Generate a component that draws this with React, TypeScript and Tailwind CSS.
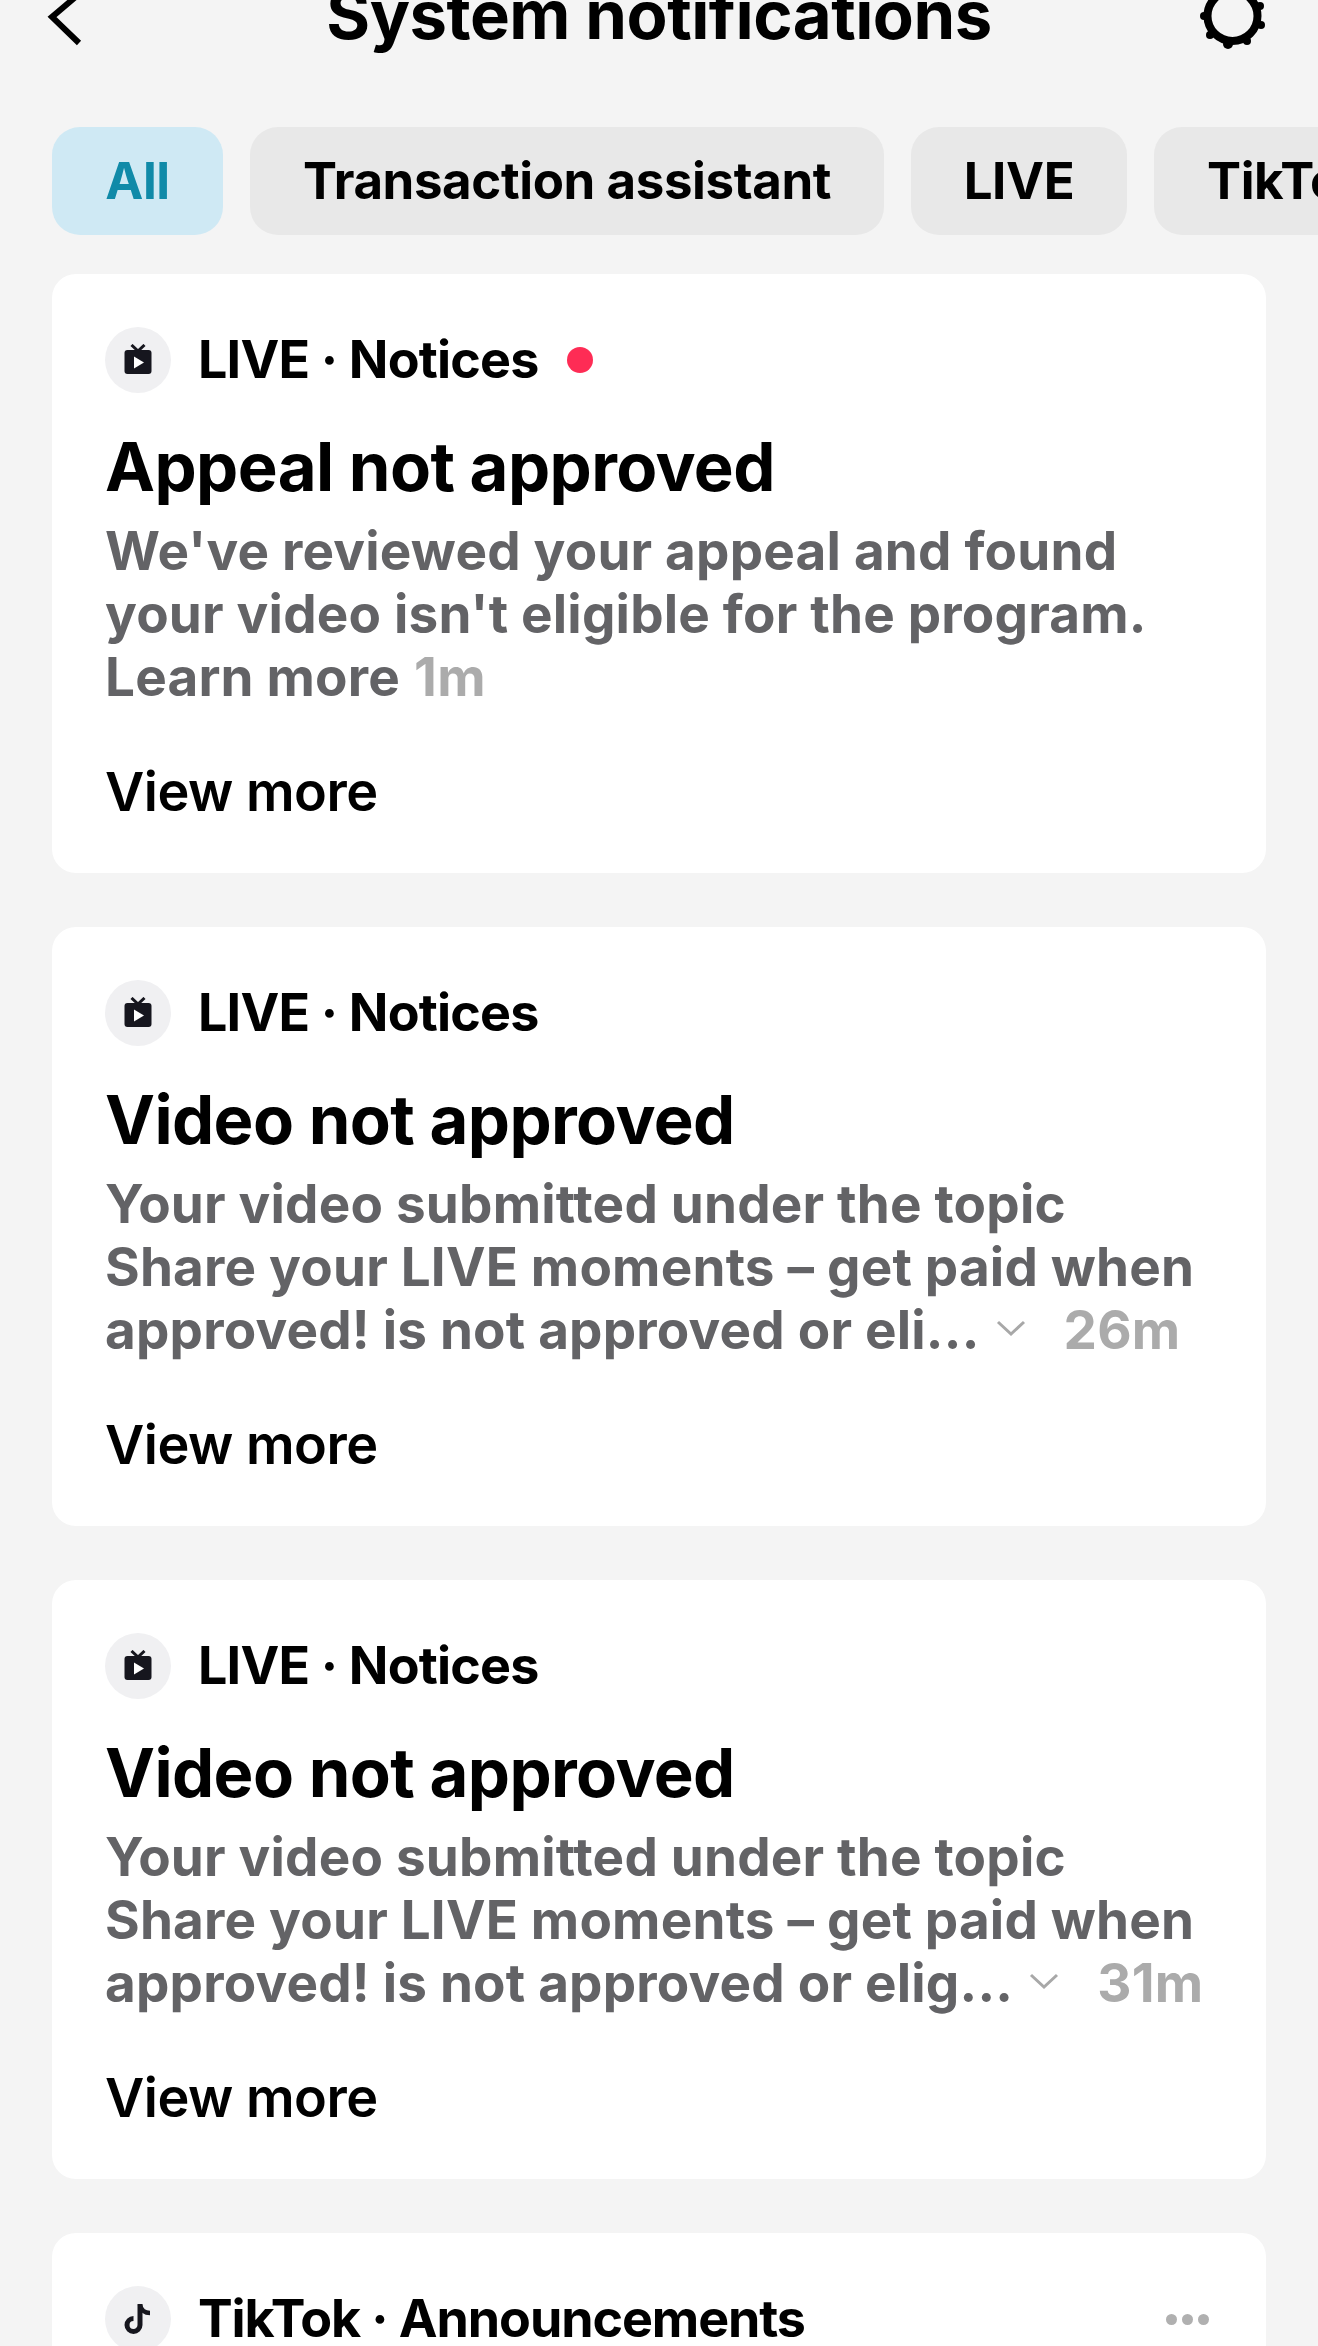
const font = "[font-family:Inter,'Liberation_Sans',sans-serif]";

function TvIcon() {
  return (
    <svg className="mb-[3px]" width="28" height="30" viewBox="0 0 28 30" fill="none">
      <path d="M7.500 1l6.500 6 6.500-6" stroke="#16161e" strokeWidth="3" />
      <rect x="0.500" y="6" width="27" height="24" rx="3" fill="#16161e" />
      <path d="M10 12.500l10 6-10 6z" fill="#fff" />
    </svg>
  );
}

function NoteIcon() {
  return (
    <svg width="30" height="36" viewBox="0 0 30 36" fill="none">
      <path d="M17 3v21a6.500 6.500 0 1 1-6.500-6.500" stroke="#16161e" strokeWidth="5" />
      <path d="M17 4c1 5 5 8 10 8" stroke="#16161e" strokeWidth="4.500" />
    </svg>
  );
}

function Card({ source, title, lines, last, time, chevron, dot }: { source: string; title: string; lines: string[]; last: string; time: string; chevron?: boolean; dot?: boolean }) {
  return (
    <section className="mx-[52px] h-[599px] rounded-[24px] bg-white px-[53px] pt-[53px]">
      <div className="flex h-[66px] items-center">
        <div className="flex h-[66px] w-[66px] items-center justify-center rounded-full bg-[#f0f0f2]"><TvIcon /></div>
        <span className="ml-[27px] text-[52px] leading-[66px] font-bold tracking-[-0.8px] text-black">{source}</span>
        {dot && <span className="ml-[28px] h-[26px] w-[26px] rounded-full bg-[#fe2c55]" />}
      </div>
      <h2 className="mt-[36px] text-[67px] leading-[76px] font-bold tracking-[-0.6px] text-black">{title}</h2>
      <div className="mt-[15px] text-[53px] leading-[63px] font-bold tracking-[0.2px] text-[#636366]">
        {lines.map((l) => <div key={l}>{l}</div>)}
        <div className="flex items-center whitespace-nowrap">
          <span>{last}</span>
          {chevron && (
            <svg className="ml-[16px] mb-[6px]" width="30" height="20" viewBox="0 0 30 20" fill="none"><path d="M2 4l13 12L28 4" stroke="#a8a8a8" strokeWidth="3" /></svg>
          )}
          <span className={`${chevron ? "ml-[38px]" : "ml-[14px]"} text-[#ababab]`}>{time}</span>
        </div>
      </div>
      <div className="mt-[50px] text-[54px] leading-[66px] font-semibold tracking-[-0.5px] text-black">View more</div>
    </section>
  );
}

export default function App() {
  const lines = ["Your video submitted under the topic", "Share your LIVE moments – get paid when"];
  return (
    <div className={`${font} h-[2346px] w-[1318px] overflow-hidden bg-[#f4f4f4]`}>
      <header className="relative flex h-[127px] items-start justify-center">
        <svg className="absolute left-[44px] top-[-6px]" width="42" height="54" viewBox="0 0 42 54" fill="none"><path d="M35 0L8 23l27 26" stroke="#000" strokeWidth="6" /></svg>
        <h1 className="mt-[-21px] text-[67px] leading-[72px] font-bold tracking-[-0.5px] text-black">System notifications</h1>
        <svg className="absolute left-[1198px] top-[-16px]" width="70" height="70" viewBox="0 0 70 70" fill="none">
          <circle cx="34.500" cy="32" r="25" stroke="#000" strokeWidth="8" />
          <g fill="#000">
            <circle cx="6" cy="32" r="4" /><circle cx="62" cy="22" r="4" /><circle cx="63" cy="41" r="4" /><circle cx="12" cy="51" r="4" /><circle cx="30" cy="60" r="5" /><circle cx="49" cy="57" r="4" />
          </g>
        </svg>
      </header>
      <nav className="flex h-[108px] gap-[27px] overflow-hidden pl-[52px] text-[51px] leading-[108px] font-bold tracking-[-0.4px] text-black">
        <div className="w-[171px] shrink-0 rounded-[28px] bg-[#cfe9f4] text-center text-[#108aa8]">All</div>
        <div className="w-[634px] shrink-0 rounded-[28px] bg-[#e8e8e8] text-center">Transaction assistant</div>
        <div className="w-[216px] shrink-0 rounded-[28px] bg-[#e8e8e8] text-center">LIVE</div>
        <div className="w-[300px] shrink-0 rounded-[28px] bg-[#e8e8e8] pl-[53px]">TikTok</div>
      </nav>
      <main className="mt-[39px] flex flex-col gap-[54px]">
        <Card dot source="LIVE · Notices" title="Appeal not approved" lines={["We've reviewed your appeal and found", "your video isn't eligible for the program."]} last="Learn more" time="1m" />
        <Card source="LIVE · Notices" title="Video not approved" lines={lines} last="approved! is not approved or eli..." time="26m" chevron />
        <Card source="LIVE · Notices" title="Video not approved" lines={lines} last="approved! is not approved or elig..." time="31m" chevron />
        <section className="mx-[52px] h-[300px] rounded-[24px] bg-white px-[53px] pt-[53px]">
          <div className="flex h-[66px] items-center">
            <div className="flex h-[66px] w-[66px] items-center justify-center rounded-full bg-[#f0f0f2]"><NoteIcon /></div>
            <span className="ml-[27px] text-[52px] leading-[66px] font-bold tracking-[-1.1px] text-black">TikTok · Announcements</span>
            <div className="ml-auto mr-[4px] flex gap-[5px]">
              <span className="h-[11px] w-[11px] rounded-full bg-[#b0b0b0]" /><span className="h-[11px] w-[11px] rounded-full bg-[#b0b0b0]" /><span className="h-[11px] w-[11px] rounded-full bg-[#b0b0b0]" />
            </div>
          </div>
        </section>
      </main>
    </div>
  );
}
